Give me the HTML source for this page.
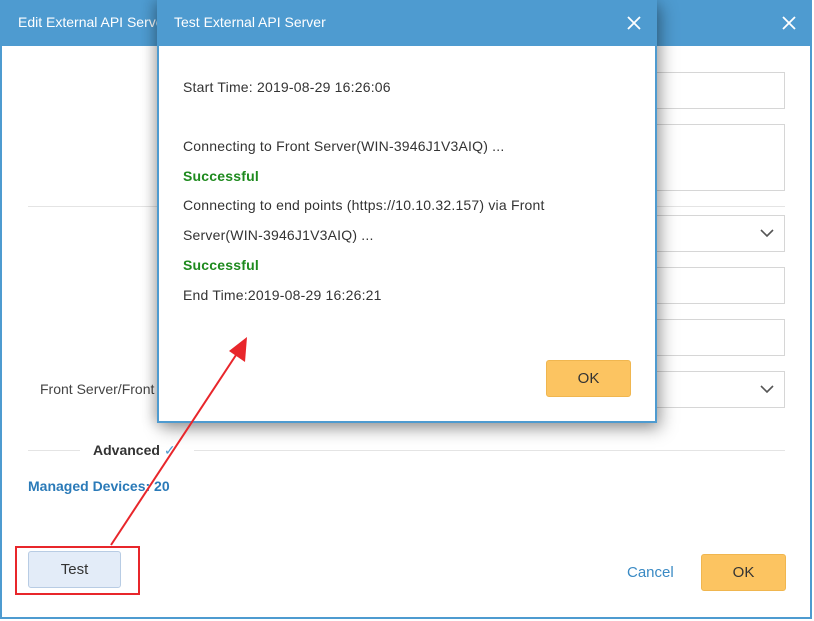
<!DOCTYPE html>
<html><head><style>
*{margin:0;padding:0;box-sizing:border-box}
body{width:814px;height:621px;background:#fff;position:relative;overflow:hidden;font-family:"Liberation Sans",sans-serif;font-size:14px;color:#333}
.abs{position:absolute}
.hdr{background:#4e9bd0;color:#fff}
.inp{position:absolute;border:1px solid #d6d6d6;background:#fff;left:200px;width:585px}
.chev{position:absolute;right:10px;top:50%;margin-top:-5px}
.t{position:absolute;left:26px;white-space:nowrap;letter-spacing:0.2px}
.g{color:#1e8a1e;font-weight:bold}
</style></head><body>
<div class="abs" style="left:0;top:0;width:812px;height:619px;border:2px solid #4e9bd0;border-top:none;background:#fff"></div>
<div class="abs hdr" style="left:0;top:0;width:812px;height:46px"></div>
<div class="abs" style="left:18px;top:14px;color:#fff;font-size:14px">Edit External API Server</div>
<svg class="abs" style="left:782px;top:16px" width="14" height="14"><path d="M1 1L13 13M13 1L1 13" stroke="#fff" stroke-width="1.8"/></svg>
<div class="inp" style="top:72px;height:37px"></div>
<div class="inp" style="top:124px;height:67px"></div>
<div class="abs" style="left:28px;top:206px;width:757px;height:1px;background:#e4e4e4"></div>
<div class="inp" style="top:215px;height:37px"><svg class="chev" width="14" height="9"><path d="M1 1l6 6 6-6" stroke="#555" stroke-width="1.6" fill="none"/></svg></div>
<div class="inp" style="top:267px;height:37px"></div>
<div class="inp" style="top:319px;height:37px"></div>
<div class="inp" style="top:371px;height:37px"><svg class="chev" width="14" height="9"><path d="M1 1l6 6 6-6" stroke="#555" stroke-width="1.6" fill="none"/></svg></div>
<div class="abs" style="left:40px;top:381px;color:#444">Front Server/Front</div>
<div class="abs" style="left:28px;top:450px;width:52px;height:1px;background:#e4e4e4"></div>
<div class="abs" style="left:194px;top:450px;width:591px;height:1px;background:#e4e4e4"></div>
<div class="abs" style="left:93px;top:442px;font-weight:bold;color:#333">Advanced <span style="color:#4e9bd0;font-weight:normal">✓</span></div>
<div class="abs" style="left:28px;top:478px;font-weight:bold;color:#2a7ab8">Managed Devices: 20</div>
<div class="abs" style="left:28px;top:551px;width:93px;height:37px;background:#e3ecf8;border:1px solid #b8cce4;border-radius:3px;text-align:center;line-height:35px;font-size:15px">Test</div>
<div class="abs" style="left:15px;top:546px;width:125px;height:49px;border:2px solid #e8262b"></div>
<div class="abs" style="left:627px;top:564px;color:#3a8ac4;font-size:15px">Cancel</div>
<div class="abs" style="left:701px;top:554px;width:85px;height:37px;background:#fcc461;border:1px solid #f0b64f;border-radius:3px;text-align:center;line-height:35px;font-size:15px">OK</div>
<div class="abs" style="left:157px;top:0;width:500px;height:423px;background:#fff;border:2px solid #4e9bd0;border-top:none;box-shadow:4px 6px 16px rgba(0,0,0,0.35),-4px 0 12px rgba(0,0,0,0.2)"></div>
<div class="abs hdr" style="left:157px;top:0;width:500px;height:46px"></div>
<div class="abs" style="left:174px;top:14px;color:#fff;font-size:14px">Test External API Server</div>
<svg class="abs" style="left:627px;top:16px" width="14" height="14"><path d="M1 1L13 13M13 1L1 13" stroke="#fff" stroke-width="1.8"/></svg>
<div class="abs" style="left:157px;top:0;width:500px">
<div class="t" style="top:79px">Start Time: 2019-08-29 16:26:06</div>
<div class="t" style="top:138px">Connecting to Front Server(WIN-3946J1V3AIQ) ...</div>
<div class="t g" style="top:168px">Successful</div>
<div class="t" style="top:197px">Connecting to end points (https://10.10.32.157) via Front</div>
<div class="t" style="top:227px">Server(WIN-3946J1V3AIQ) ...</div>
<div class="t g" style="top:257px">Successful</div>
<div class="t" style="top:287px">End Time:2019-08-29 16:26:21</div>
</div>
<div class="abs" style="left:546px;top:360px;width:85px;height:37px;background:#fcc461;border:1px solid #f0b64f;border-radius:3px;text-align:center;line-height:35px;font-size:15px">OK</div>
<svg class="abs" style="left:0;top:0" width="814" height="621">
<line x1="111" y1="545" x2="238" y2="352" stroke="#e8262b" stroke-width="2"/>
<polygon points="247,337 245,362 229,351" fill="#e8262b"/>
</svg>
</body></html>
